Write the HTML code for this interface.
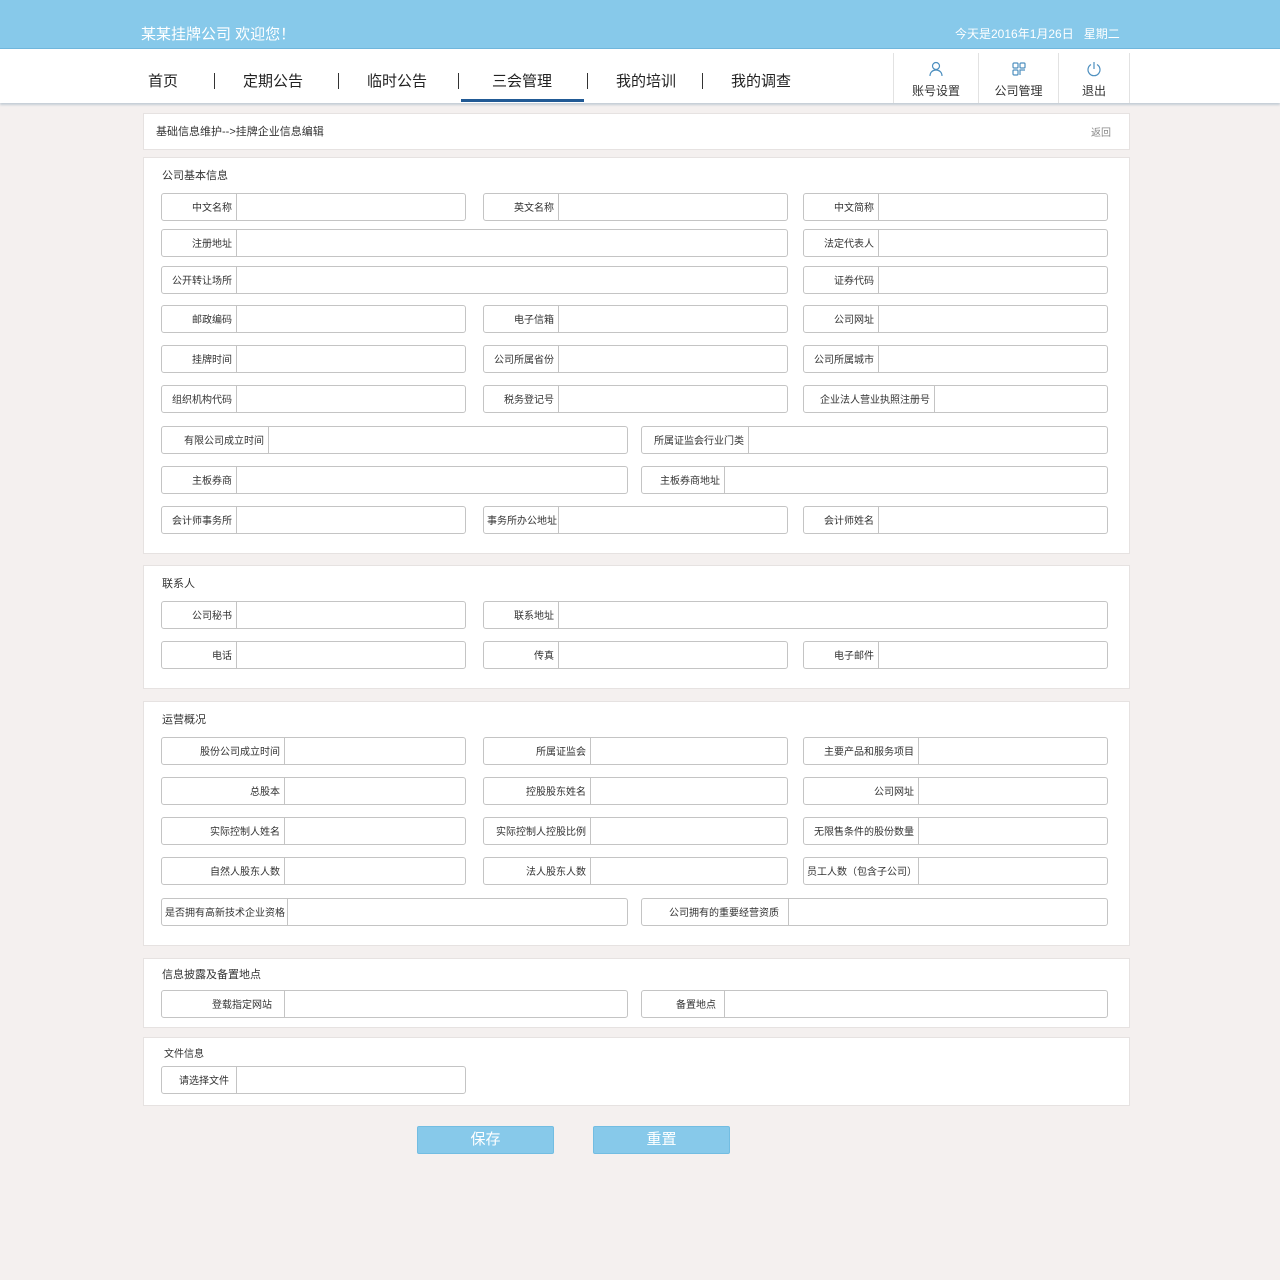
<!DOCTYPE html>
<html><head><meta charset="utf-8">
<style>
*{margin:0;padding:0;box-sizing:border-box}
body{width:1280px;height:1280px;background:#f4f0ef;font-family:"Liberation Sans","Noto Sans CJK SC",sans-serif;position:relative;overflow:hidden;color:#333}
.a{position:absolute}
.top{left:0;top:0;width:1280px;height:49px;background:#87c9ea;border-bottom:1px solid #6fb6dc}
.nav{left:0;top:49px;width:1280px;height:54px;background:#fff;box-shadow:0 2px 2px #c5ced6}
.nav span{position:absolute;top:21px;font-size:15px;color:#222}
.sep{position:absolute;top:24px;width:1px;height:16px;background:#333}
.ib{position:absolute;top:4px;height:50px;border-left:1px solid #e2e2e2;text-align:center;font-size:12px;color:#333}
.p{background:#fff;border:1px solid #e6e2e1}
.t{font-size:11px;color:#333}
.f{position:absolute;height:28px;border:1px solid #c4c4c4;border-radius:3px;background:#fff;font-size:10px;color:#333}
.f i{position:absolute;top:0;height:26px;border-right:1px solid #c4c4c4;font-style:normal;line-height:26px;padding-top:2px;text-align:right;padding-right:4px;left:0;white-space:nowrap}
.btn{position:absolute;top:1126px;height:28px;width:137px;background:#87c9ea;border:1px solid #72bde2;border-radius:2px;color:#fff;font-size:15px;text-align:center;line-height:26px}
</style></head><body>
<div class="a top"></div>
<div class="a" style="left:141px;top:23px;color:#fff;font-size:15px">某某挂牌公司 欢迎您！</div>
<div class="a" style="left:955px;top:25px;color:#fff;font-size:12px">今天是2016年1月26日&nbsp;&nbsp;&nbsp;星期二</div>
<div class="a nav">
<span style="left:148px">首页</span><div class="sep" style="left:214px"></div>
<span style="left:243px">定期公告</span><div class="sep" style="left:338px"></div>
<span style="left:367px">临时公告</span><div class="sep" style="left:458px"></div>
<span style="left:492px">三会管理</span><div class="sep" style="left:587px"></div>
<span style="left:616px">我的培训</span><div class="sep" style="left:702px"></div>
<span style="left:731px">我的调查</span>
<div class="a" style="left:461px;top:50px;width:123px;height:3px;background:#215a95"></div>
<div class="ib" style="left:893px;width:85px"><svg width="16" height="16" viewBox="0 0 16 16" style="margin-top:8px" fill="none" stroke="#4d8fbf" stroke-width="1.2"><circle cx="8" cy="5" r="3.5"/><path d="M2 15c0-4 3-6 6-6s6 2 6 6"/></svg><div style="margin-top:2px">账号设置</div></div>
<div class="ib" style="left:978px;width:80px"><svg width="16" height="16" viewBox="0 0 16 16" style="margin-top:8px" fill="none" stroke="#4d8fbf" stroke-width="1.2"><rect x="2" y="2" width="5" height="5" rx="1"/><rect x="9" y="2" width="5" height="5" rx="1"/><rect x="2" y="9" width="5" height="5" rx="1"/><path d="M9 14V9h5"/></svg><div style="margin-top:2px">公司管理</div></div>
<div class="ib" style="left:1058px;width:72px;border-right:1px solid #e2e2e2"><svg width="16" height="16" viewBox="0 0 16 16" style="margin-top:8px" fill="none" stroke="#4d8fbf" stroke-width="1.2"><path d="M5 3.5A6 6 0 1 0 11 3.5"/><path d="M8 1v7"/></svg><div style="margin-top:2px">退出</div></div>
</div>
<div class="a p" style="left:143px;top:113px;width:987px;height:37px"></div>
<div class="a t" style="left:156px;top:123px">基础信息维护-->挂牌企业信息编辑</div>
<div class="a" style="left:1091px;top:124px;font-size:10px;color:#888">返回</div>

<div class="a p" style="left:143px;top:157px;width:987px;height:397px"></div>
<div class="a t" style="left:162px;top:167px">公司基本信息</div>
<div class="a p" style="left:143px;top:565px;width:987px;height:124px"></div>
<div class="a t" style="left:162px;top:575px">联系人</div>
<div class="a p" style="left:143px;top:701px;width:987px;height:245px"></div>
<div class="a t" style="left:162px;top:711px">运营概况</div>
<div class="a p" style="left:143px;top:958px;width:987px;height:70px"></div>
<div class="a t" style="left:162px;top:966px">信息披露及备置地点</div>
<div class="a p" style="left:143px;top:1037px;width:987px;height:69px"></div>
<div class="a" style="left:164px;top:1045px;font-size:10px">文件信息</div>

<div class="f" style="left:161px;top:193px;width:305px"><i style="width:75px">中文名称</i></div>
<div class="f" style="left:483px;top:193px;width:305px"><i style="width:75px">英文名称</i></div>
<div class="f" style="left:803px;top:193px;width:305px"><i style="width:75px">中文简称</i></div>
<div class="f" style="left:161px;top:229px;width:627px"><i style="width:75px">注册地址</i></div>
<div class="f" style="left:803px;top:229px;width:305px"><i style="width:75px">法定代表人</i></div>
<div class="f" style="left:161px;top:266px;width:627px"><i style="width:75px">公开转让场所</i></div>
<div class="f" style="left:803px;top:266px;width:305px"><i style="width:75px">证券代码</i></div>
<div class="f" style="left:161px;top:305px;width:305px"><i style="width:75px">邮政编码</i></div>
<div class="f" style="left:483px;top:305px;width:305px"><i style="width:75px">电子信箱</i></div>
<div class="f" style="left:803px;top:305px;width:305px"><i style="width:75px">公司网址</i></div>
<div class="f" style="left:161px;top:345px;width:305px"><i style="width:75px">挂牌时间</i></div>
<div class="f" style="left:483px;top:345px;width:305px"><i style="width:75px">公司所属省份</i></div>
<div class="f" style="left:803px;top:345px;width:305px"><i style="width:75px">公司所属城市</i></div>
<div class="f" style="left:161px;top:385px;width:305px"><i style="width:75px">组织机构代码</i></div>
<div class="f" style="left:483px;top:385px;width:305px"><i style="width:75px">税务登记号</i></div>
<div class="f" style="left:803px;top:385px;width:305px"><i style="width:131px">企业法人营业执照注册号</i></div>
<div class="f" style="left:161px;top:426px;width:467px"><i style="width:107px">有限公司成立时间</i></div>
<div class="f" style="left:641px;top:426px;width:467px"><i style="width:107px">所属证监会行业门类</i></div>
<div class="f" style="left:161px;top:466px;width:467px"><i style="width:75px">主板券商</i></div>
<div class="f" style="left:641px;top:466px;width:467px"><i style="width:83px">主板券商地址</i></div>
<div class="f" style="left:161px;top:506px;width:305px"><i style="width:75px">会计师事务所</i></div>
<div class="f" style="left:483px;top:506px;width:305px"><i style="width:75px;padding-right:1px">事务所办公地址</i></div>
<div class="f" style="left:803px;top:506px;width:305px"><i style="width:75px">会计师姓名</i></div>
<div class="f" style="left:161px;top:601px;width:305px"><i style="width:75px">公司秘书</i></div>
<div class="f" style="left:483px;top:601px;width:625px"><i style="width:75px">联系地址</i></div>
<div class="f" style="left:161px;top:641px;width:305px"><i style="width:75px">电话</i></div>
<div class="f" style="left:483px;top:641px;width:305px"><i style="width:75px">传真</i></div>
<div class="f" style="left:803px;top:641px;width:305px"><i style="width:75px">电子邮件</i></div>
<div class="f" style="left:161px;top:737px;width:305px"><i style="width:123px">股份公司成立时间</i></div>
<div class="f" style="left:483px;top:737px;width:305px"><i style="width:107px">所属证监会</i></div>
<div class="f" style="left:803px;top:737px;width:305px"><i style="width:115px">主要产品和服务项目</i></div>
<div class="f" style="left:161px;top:777px;width:305px"><i style="width:123px">总股本</i></div>
<div class="f" style="left:483px;top:777px;width:305px"><i style="width:107px">控股股东姓名</i></div>
<div class="f" style="left:803px;top:777px;width:305px"><i style="width:115px">公司网址</i></div>
<div class="f" style="left:161px;top:817px;width:305px"><i style="width:123px">实际控制人姓名</i></div>
<div class="f" style="left:483px;top:817px;width:305px"><i style="width:107px">实际控制人控股比例</i></div>
<div class="f" style="left:803px;top:817px;width:305px"><i style="width:115px">无限售条件的股份数量</i></div>
<div class="f" style="left:161px;top:857px;width:305px"><i style="width:123px">自然人股东人数</i></div>
<div class="f" style="left:483px;top:857px;width:305px"><i style="width:107px">法人股东人数</i></div>
<div class="f" style="left:803px;top:857px;width:305px"><i style="width:115px;padding-right:1px">员工人数（包含子公司）</i></div>
<div class="f" style="left:161px;top:898px;width:467px"><i style="width:126px;padding-right:2px">是否拥有高新技术企业资格</i></div>
<div class="f" style="left:641px;top:898px;width:467px"><i style="width:147px;padding-right:9px">公司拥有的重要经营资质</i></div>
<div class="f" style="left:161px;top:990px;width:467px"><i style="width:123px;padding-right:12px">登载指定网站</i></div>
<div class="f" style="left:641px;top:990px;width:467px"><i style="width:83px;padding-right:8px">备置地点</i></div>
<div class="f" style="left:161px;top:1066px;width:305px"><i style="width:75px;padding-right:7px">请选择文件</i></div>

<div class="btn" style="left:417px">保存</div>
<div class="btn" style="left:593px">重置</div>
</body></html>
